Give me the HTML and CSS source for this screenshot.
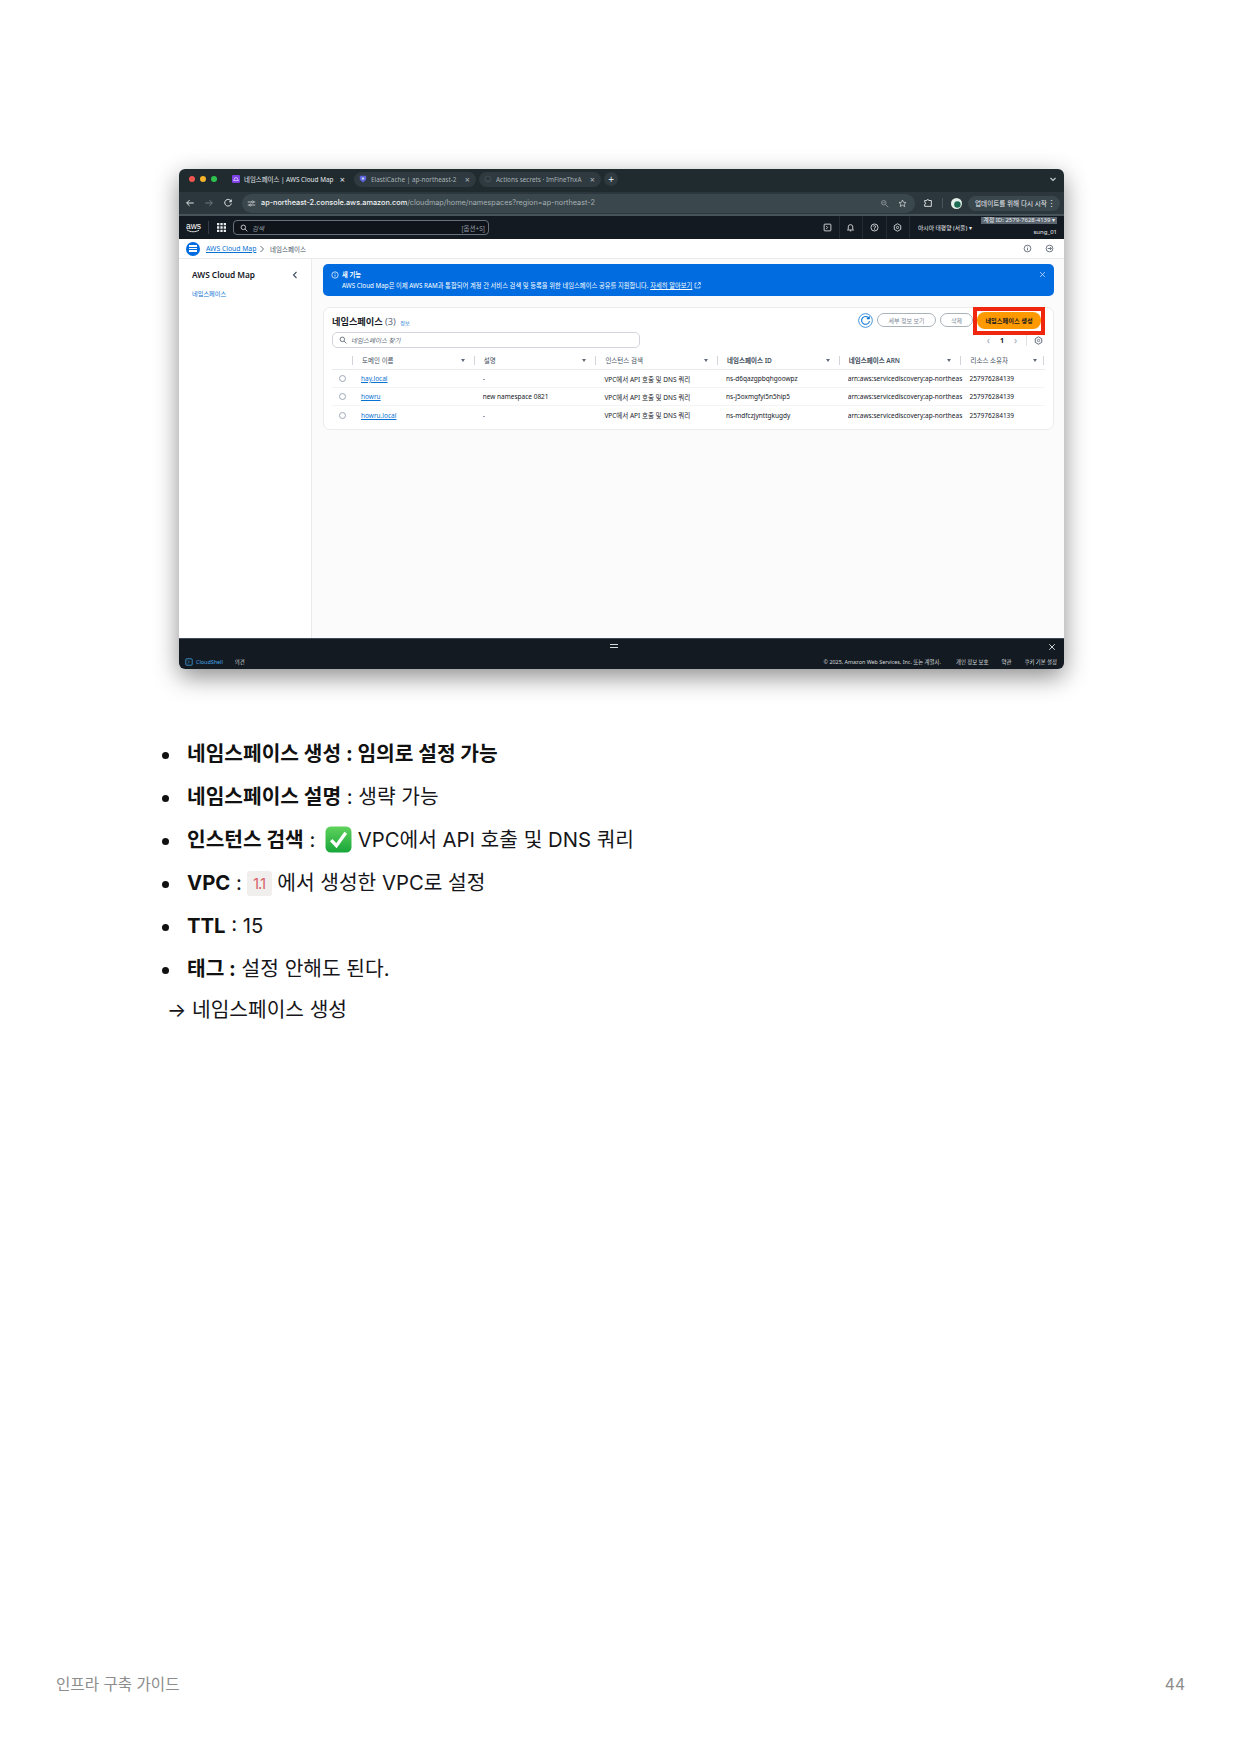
FILE: index.html
```html
<!DOCTYPE html>
<html lang="ko">

<head>
    <meta charset="UTF-8">
    <meta name="viewport" content="width=device-width, initial-scale=1.0">
    <title>인프라 구축 가이드</title>
    <link rel="stylesheet" href="styles.css">
</head>

<body>
    <div class="page">
        <div class="shot">
            <div class="tabbar">
                <div class="lights"><i class="red"></i><i class="yellow"></i><i class="green"></i></div>
                <div class="tab tab-active">
                    <svg class="fav" viewBox="0 0 10 10"><rect width="10" height="10" rx="1.5" fill="#7b3fe4"/><path d="M2 7h6L6.500 3.500h-3z" fill="none" stroke="#fff" stroke-width=".8"/></svg>
                    <span class="tab-title">네임스페이스 | AWS Cloud Map</span><span class="tab-x">×</span>
                </div>
                <div class="tab">
                    <svg class="fav" viewBox="0 0 10 10"><path d="M1 1h8v5L5 9.500 1 6z" fill="#5a62d8"/><path d="M3.500 3h3v2.500h-3z" fill="#cfd2f5"/></svg>
                    <span class="tab-title">ElastiCache | ap-northeast-2</span><span class="tab-x">×</span>
                </div>
                <div class="tab">
                    <svg class="fav" viewBox="0 0 10 10"><circle cx="5" cy="5" r="4.500" fill="#3b474b"/><circle cx="5" cy="4.500" r="2" fill="#26323a"/></svg>
                    <span class="tab-title">Actions secrets · ImFineThxA</span><span class="tab-x">×</span>
                </div>
                <span class="newtab">+</span>
                <svg class="tab-menu" viewBox="0 0 8 8"><path d="M1.500 3l2.500 2.500L6.500 3" fill="none" stroke="#c8cdcf" stroke-width="1.200"/></svg>
            </div>

            <div class="toolbar">
                <svg class="tb-icon" viewBox="0 0 12 12"><path d="M10.500 6H2M5.500 2.500L2 6l3.500 3.500" fill="none" stroke="#dfe3e5" stroke-width="1.200"/></svg>
                <svg class="tb-icon tb-dim" viewBox="0 0 12 12"><path d="M1.500 6H10M6.500 2.500L10 6l-3.500 3.500" fill="none" stroke="#6f7a7e" stroke-width="1.200"/></svg>
                <svg class="tb-icon" viewBox="0 0 12 12"><path d="M9.800 4.200A4 4 0 1 0 10 6.500M10 1.800v2.700H7.300" fill="none" stroke="#dfe3e5" stroke-width="1.200"/></svg>
                <div class="omnibox">
                    <svg class="tune" viewBox="0 0 12 12"><path d="M1 4h5M9 4h2M1 8h2M6 8h5" stroke="#dfe3e5" stroke-width="1"/><circle cx="7.500" cy="4" r="1.300" fill="none" stroke="#dfe3e5"/><circle cx="4.500" cy="8" r="1.300" fill="none" stroke="#dfe3e5"/></svg>
                    <span class="url"><b>ap-northeast-2.console.aws.amazon.com</b>/cloudmap/home/namespaces?region=ap-northeast-2</span>
                    <svg class="omni-icon zoomglass" viewBox="0 0 12 12"><circle cx="5" cy="5" r="3" fill="none" stroke="#99a3a6"/><path d="M7.500 7.500L11 11M3.500 5h3" stroke="#99a3a6"/></svg>
                    <svg class="omni-icon" viewBox="0 0 12 12"><path d="M6 1.300l1.400 3.100 3.300.3-2.500 2.200.8 3.300L6 8.200l-3 1.800.8-3.300L1.300 4.700l3.300-.3z" fill="none" stroke="#dfe3e5" stroke-width=".9"/></svg>
                </div>
                <svg class="ext" viewBox="0 0 12 12"><path d="M2 3h2.500a1.200 1.200 0 0 1 2.400 0H10v7H2V7.500a1.200 1.200 0 0 0 0-2.400z" fill="none" stroke="#e6e9ea" stroke-width="1.100"/></svg>
                <span class="tb-sep"></span>
                <svg class="avatar" viewBox="0 0 12 12"><circle cx="6" cy="6" r="6" fill="#e4efe9"/><circle cx="7" cy="7" r="3.500" fill="#1d6b52"/></svg>
                <div class="update">업데이트를 위해 다시 시작<span class="kebab">⋮</span></div>
            </div>

            <div class="awsnav">
                <div class="aws-logo">aws<svg viewBox="0 0 16 4"><path d="M1 .8c4 2.600 9 2.600 13 .3" fill="none" stroke="#fff" stroke-width=".9"/></svg></div>
                <span class="nav-sep"></span>
                <svg class="apps" viewBox="0 0 9 9"><path d="M0 0h2.300v2.300H0zM3.350 0h2.300v2.300h-2.300zM6.700 0H9v2.300H6.700zM0 3.350h2.300v2.300H0zM3.350 3.350h2.300v2.300h-2.300zM6.700 3.350H9v2.300H6.700zM0 6.700h2.300V9H0zM3.350 6.700h2.300V9h-2.300zM6.700 6.700H9V9H6.700z" fill="#e9edef"/></svg>
                <div class="aws-search">
                    <svg class="glass" viewBox="0 0 12 12"><circle cx="5" cy="5" r="3.400" fill="none" stroke="#e4e7e9" stroke-width="1.200"/><path d="M7.600 7.600L11 11" stroke="#e4e7e9" stroke-width="1.200"/></svg>
                    <em>검색</em><span class="hotkey">[옵션+S]</span>
                </div>
                <div class="nav-right">
                    <span class="nav-btn"><svg viewBox="0 0 12 12"><rect x="1.500" y="1.500" width="9" height="9" rx="1" fill="none" stroke="#e9edef" stroke-width="1.100"/><path d="M4 3.800L6.200 6 4 8.200" fill="none" stroke="#e9edef"/></svg></span>
                    <span class="nav-btn"><svg viewBox="0 0 12 12"><path d="M3 8.500V5.200a3 3 0 0 1 6 0v3.300l1 .8H2zM5 10.500h2" fill="none" stroke="#e9edef" stroke-width="1.100"/></svg></span>
                    <span class="nav-btn"><svg viewBox="0 0 12 12"><circle cx="6" cy="6" r="4.700" fill="none" stroke="#e9edef" stroke-width="1.100"/><path d="M4.500 4.800a1.500 1.500 0 1 1 1.500 1.700v1M6 8.200v1" fill="none" stroke="#e9edef"/></svg></span>
                    <span class="nav-btn"><svg viewBox="0 0 12 12"><path d="M6 1l4.300 2.500v5L6 11 1.700 8.500v-5z" fill="none" stroke="#e9edef" stroke-width="1.100"/><circle cx="6" cy="6" r="1.500" fill="none" stroke="#e9edef"/></svg></span>
                    <span class="region">아시아 태평양 (서울) ▾</span>
                    <div class="account">
                        <span class="acct-id">계정 ID: 2579-7628-4139 ▾</span>
                        <span class="acct-user">sung_01</span>
                    </div>
                </div>
            </div>

            <div class="crumbs">
                <span class="menu-dot"><i></i><i></i><i></i></span>
                <a class="link crumb-link">AWS Cloud Map</a>
                <svg class="crumb-sep" viewBox="0 0 6 8"><path d="M1.500 1l3 3-3 3" fill="none" stroke="#687078"/></svg>
                <span class="crumb-cur">네임스페이스</span>
                <div class="crumb-right">
                    <svg viewBox="0 0 12 12"><circle cx="6" cy="6" r="4.500" fill="none" stroke="#414d5c"/><path d="M6 5.500v3M6 3.500v1" stroke="#414d5c"/></svg>
                    <svg class="crumb-clock" viewBox="0 0 12 12"><circle cx="6" cy="6" r="4.500" fill="none" stroke="#414d5c"/><path d="M3.500 6h5M6.500 4l2 2-2 2" fill="none" stroke="#414d5c"/></svg>
                </div>
            </div>

            <div class="console">
                <aside class="side">
                    <div class="side-head"><strong>AWS Cloud Map</strong>
                        <svg viewBox="0 0 6 8"><path d="M4.500 1l-3 3 3 3" fill="none" stroke="#414d5c" stroke-width="1.100"/></svg>
                    </div>
                    <a class="side-link">네임스페이스</a>
                </aside>
                <main class="content">
                    <div class="banner">
                        <svg class="banner-info" viewBox="0 0 12 12"><circle cx="6" cy="6" r="4.800" fill="none" stroke="#fff" stroke-width="1.100"/><path d="M6 5.300v3.200M6 3.200v1.200" stroke="#fff" stroke-width="1.100"/></svg>
                        <div class="banner-text">
                            <strong>새 기능</strong>
                            <p>AWS Cloud Map은 이제 AWS RAM과 통합되어 계정 간 서비스 검색 및 등록을 위한 네임스페이스 공유를 지원합니다. <u>자세히 알아보기</u>
                                <svg viewBox="0 0 10 10"><path d="M4 1.500H1.500v7h7V6M5.500 1h3.500v3.500M9 1L5 5" fill="none" stroke="#fff"/></svg>
                            </p>
                        </div>
                        <svg class="banner-x" viewBox="0 0 10 10"><path d="M1.500 1.500l7 7M8.500 1.500l-7 7" stroke="#dbe9fb" stroke-width="1"/></svg>
                    </div>

                    <section class="card">
                        <div class="card-head">
                            <h2>네임스페이스 <span>(3)</span> <a class="info">정보</a></h2>
                            <div class="actions">
                                <svg class="refresh" viewBox="0 0 16 16"><circle cx="8" cy="8" r="7.300" fill="none" stroke="#0972d3" stroke-width=".8"/><path d="M11.500 5.500A4.200 4.200 0 1 0 12.200 8.500M12 3.500v2.500H9.500" fill="none" stroke="#0972d3" stroke-width="1.100"/></svg>
                                <span class="btn btn-wide">세부 정보 보기</span>
                                <span class="btn btn-del">삭제</span>
                                <div class="mark"><span class="btn-create">네임스페이스 생성</span></div>
                            </div>
                        </div>
                        <div class="filter-row">
                            <div class="filter">
                                <svg viewBox="0 0 12 12"><circle cx="5" cy="5" r="3.400" fill="none" stroke="#414d5c" stroke-width="1.100"/><path d="M7.600 7.600L11 11" stroke="#414d5c" stroke-width="1.100"/></svg>
                                <em>네임스페이스 찾기</em>
                            </div>
                            <div class="pager">
                                <span class="pg-arrow">‹</span><b>1</b><span class="pg-arrow">›</span><span class="pg-sep"></span>
                                <svg viewBox="0 0 12 12"><path d="M6 1l4.300 2.500v5L6 11 1.700 8.500v-5z" fill="none" stroke="#5f6b7a" stroke-width="1.300"/><circle cx="6" cy="6" r="1.600" fill="none" stroke="#5f6b7a" stroke-width="1.100"/></svg>
                            </div>
                        </div>

                        <div class="tbl">
                            <div class="row thead">
                                <span></span>
                                <span class="th">도메인 이름</span>
                                <span class="th">설명</span>
                                <span class="th">인스턴스 검색</span>
                                <span class="th"><b>네임스페이스 ID</b></span>
                                <span class="th"><b>네임스페이스 ARN</b></span>
                                <span class="th th-short">리소스 소유자</span>
                            </div>
                            <div class="row">
                                <span class="radio"></span>
                                <a class="link">hay.local</a>
                                <span>-</span>
                                <span>VPC에서 API 호출 및 DNS 쿼리</span>
                                <span>ns-d6qazgpbqhgoowpz</span>
                                <span>arn:aws:servicediscovery:ap-northeas</span>
                                <span>257976284139</span>
                            </div>
                            <div class="row">
                                <span class="radio"></span>
                                <a class="link">howru</a>
                                <span>new namespace 0821</span>
                                <span>VPC에서 API 호출 및 DNS 쿼리</span>
                                <span>ns-j5oxmgfyi5n5hip5</span>
                                <span>arn:aws:servicediscovery:ap-northeas</span>
                                <span>257976284139</span>
                            </div>
                            <div class="row row-last">
                                <span class="radio"></span>
                                <a class="link">howru.local</a>
                                <span>-</span>
                                <span>VPC에서 API 호출 및 DNS 쿼리</span>
                                <span>ns-mdfczjynttgkugdy</span>
                                <span>arn:aws:servicediscovery:ap-northeas</span>
                                <span>257976284139</span>
                            </div>
                        </div>
                    </section>
                </main>
            </div>

            <div class="shell-bar">
                <span class="handle"></span>
                <svg viewBox="0 0 10 10"><path d="M1.500 1.500l7 7M8.500 1.500l-7 7" stroke="#e9edef" stroke-width="1.100"/></svg>
            </div>
            <div class="aws-foot">
                <svg viewBox="0 0 10 10"><rect x="1" y="1" width="8" height="8" rx="1" fill="none" stroke="#42a5e8"/><path d="M3.500 3l2 2-2 2" fill="none" stroke="#42a5e8" stroke-width=".8"/></svg>
                <span class="cs">CloudShell</span>
                <span class="fb">의견</span>
                <span class="copy">© 2025, Amazon Web Services, Inc. 또는 계열사.</span>
                <span>개인 정보 보호</span>
                <span>약관</span>
                <span>쿠키 기본 설정</span>
            </div>
        </div>

        <ul class="notes">
            <li><b>네임스페이스 생성 : 임의로 설정 가능</b></li>
            <li><b>네임스페이스 설명</b> : 생략 가능</li>
            <li><b>인스턴스 검색</b> :
                <svg class="check" viewBox="0 0 26 26"><defs><linearGradient id="chk" x1="0" y1="0" x2="0" y2="1"><stop offset="0" stop-color="#5fd25c"/><stop offset="1" stop-color="#18a63a"/></linearGradient></defs><rect x=".5" y=".5" width="25" height="25" rx="5" fill="url(#chk)"/><path d="M6 13.500l5 5.500L20 6.500" fill="none" stroke="#fff" stroke-width="3.200"/></svg>
                VPC에서 API 호출 및 DNS 쿼리</li>
            <li><b>VPC</b> : <code>1.1</code> 에서 생성한 VPC로 설정</li>
            <li><b>TTL</b> : 15</li>
            <li><b>태그 :</b> 설정 안해도 된다.</li>
        </ul>
        <p class="next">→ 네임스페이스 생성</p>

        <footer class="foot">
            <span>인프라 구축 가이드</span>
            <span>44</span>
        </footer>
    </div>
</body>

</html>
```

FILE: styles.css
```css
* {
    margin: 0;
    padding: 0;
    box-sizing: border-box;
}

body {
    background: #fff;
    font-family: Inter, "Noto Sans CJK KR", sans-serif;
    color: #1a1a1a;
}

.page {
    height: 1754px;
    padding: 169px 57px 0 56px;
    display: flex;
    flex-direction: column;
    overflow: hidden;
}

/* screenshot of the console */
.shot {
    margin-left: 123px;
    width: 885px;
    height: 500px;
    flex: none;
    display: flex;
    flex-direction: column;
    border-radius: 6px;
    overflow: hidden;
    background: #fff;
    box-shadow: 0 8px 24px rgba(0, 0, 0, .45);
    font-family: "Noto Sans", "Noto Sans CJK KR", sans-serif;
    font-size: 6.500px;
    color: #16191f;
}

.tabbar {
    height: 23px;
    flex: none;
    background: #202b30;
    display: flex;
    align-items: center;
    padding: 0 0 3px 10px;
    color: #dfe3e5;
}

.lights {
    display: flex;
    gap: 5px;
    width: 42px;
}

.lights i {
    width: 6px;
    height: 6px;
    border-radius: 50%;
}

.red { background: #f0564f; }
.yellow { background: #f5b42a; }
.green { background: #2fc24f; }

.tab {
    width: 122px;
    height: 15px;
    margin-right: 3px;
    padding: 0 6px 0 5px;
    border-radius: 8px;
    background: #2e3a40;
    display: flex;
    align-items: center;
    gap: 4px;
    color: #a9b2b5;
    font-size: 6.400px;
    white-space: nowrap;
}

.tab-active {
    width: 120px;
    background: none;
    color: #e4e8ea;
    padding-left: 1px;
}

.fav {
    width: 8px;
    height: 8px;
    flex: none;
}

.tab-title {
    flex: 1;
    overflow: hidden;
}

.tab-x {
    font-size: 9px;
    line-height: 1;
}

.newtab {
    width: 14px;
    height: 14px;
    border-radius: 50%;
    background: #2e3a40;
    text-align: center;
    font-size: 10px;
    line-height: 14px;
}

.tab-menu {
    width: 8px;
    height: 8px;
    margin-left: auto;
    margin-right: 7px;
}

.toolbar {
    height: 24px;
    flex: none;
    background: #2b373c;
    border-bottom: 2px solid #46545a;
    display: flex;
    align-items: center;
    padding-left: 6px;
}

.tb-icon {
    width: 10px;
    height: 10px;
    margin-right: 9px;
    flex: none;
}

.omnibox {
    width: 673px;
    height: 19px;
    margin-left: 0;
    border-radius: 10px;
    background: #3a474d;
    display: flex;
    align-items: center;
    padding: 0 8px 0 5px;
    flex: none;
}

.tune {
    width: 9px;
    height: 9px;
    flex: none;
}

.url {
    margin: 0 0 1px 5px;
    font-family: Inter, sans-serif;
    font-size: 7.300px;
    color: #a6b0b3;
    white-space: nowrap;
}

.url b {
    font-weight: 500;
    color: #eef1f2;
}

.omni-icon {
    width: 9px;
    height: 9px;
    margin-left: 9px;
    flex: none;
}

.zoomglass {
    margin-left: auto;
}

.ext {
    width: 10px;
    height: 10px;
    margin-left: 8px;
    flex: none;
}

.tb-sep {
    width: 1px;
    height: 10px;
    background: #46545a;
    margin: 0 8px 0 9px;
}

.avatar {
    width: 11px;
    height: 11px;
    flex: none;
}

.update {
    margin-left: 6px;
    width: 92px;
    height: 15px;
    border-radius: 8px;
    background: #3a474d;
    color: #e9edef;
    font-size: 6.600px;
    display: flex;
    align-items: center;
    padding-left: 7px;
    justify-content: space-between;
    padding-right: 5px;
    white-space: nowrap;
}

.kebab {
    font-size: 9px;
    line-height: 1;
}

.awsnav {
    height: 23px;
    flex: none;
    background: #141a22;
    display: flex;
    align-items: center;
    padding-left: 7px;
    color: #e9edef;
}

.aws-logo {
    width: 15px;
    font-family: "Liberation Sans", sans-serif;
    font-size: 8.500px;
    line-height: 6px;
    color: #fff;
    display: flex;
    flex-direction: column;
    align-items: center;
}

.aws-logo svg {
    width: 15px;
    height: 4px;
}

.nav-sep {
    width: 1px;
    height: 13px;
    background: #333d49;
    margin: 0 8px 0 7px;
}

.apps {
    width: 9px;
    height: 9px;
    flex: none;
}

.aws-search {
    margin-left: 7px;
    width: 256px;
    height: 15px;
    border: 1px solid #68717c;
    border-radius: 4px;
    background: #0f141a;
    display: flex;
    align-items: center;
    padding: 0 3px 0 6px;
    color: #8f99a3;
}

.glass {
    width: 8px;
    height: 8px;
    flex: none;
}

.aws-search em {
    margin-left: 4px;
}

.hotkey {
    margin-left: auto;
}

.nav-right {
    display: flex;
    align-items: center;
    margin-left: auto;
    height: 100%;
}

.nav-btn {
    width: 23.500px;
    height: 100%;
    display: flex;
    align-items: center;
    justify-content: center;
    border-right: 1px solid #232c37;
}

.nav-btn svg {
    width: 9px;
    height: 9px;
}

.region {
    margin-left: 8px;
    width: 63px;
    font-size: 5.800px;
    white-space: nowrap;
}

.account {
    width: 83px;
    height: 100%;
    display: flex;
    flex-direction: column;
    align-items: flex-end;
    padding-top: 1px;
    padding-right: 7px;
    font-size: 6px;
}

.acct-id {
    background: #5b6670;
    color: #e9edef;
    padding: 0 2px;
    line-height: 7px;
    white-space: nowrap;
}

.acct-user {
    margin-top: 4px;
    line-height: 8px;
}

.crumbs {
    height: 20px;
    flex: none;
    display: flex;
    align-items: center;
    padding-left: 7px;
    border-bottom: 1px solid #e9ebed;
    font-size: 6.800px;
}

.menu-dot {
    width: 14px;
    height: 14px;
    border-radius: 50%;
    background: #006ce0;
    display: flex;
    flex-direction: column;
    align-items: center;
    justify-content: center;
    gap: 1.300px;
    margin-right: 6px;
}

.menu-dot i {
    width: 8px;
    height: 1.200px;
    background: #fff;
}

.link {
    color: #0972d3;
    text-decoration: underline;
    text-underline-offset: 1px;
}

.crumb-link {
    width: 50px;
    white-space: nowrap;
}

.crumb-sep {
    width: 6px;
    height: 8px;
    margin: 0 5px 0 3px;
}

.crumb-cur {
    color: #414d5c;
    font-size: 6.500px;
}

.crumb-right {
    margin-left: auto;
    display: flex;
    align-items: center;
    padding-right: 10px;
}

.crumb-right svg {
    width: 9px;
    height: 9px;
}

.crumb-clock {
    margin-left: 13px;
}

.console {
    flex: 1;
    display: flex;
    min-height: 0;
}

.side {
    width: 133px;
    flex: none;
    background: #fff;
    border-right: 1px solid #e9ebed;
    padding: 9px 12px 0 13px;
}

.side-head {
    display: flex;
    justify-content: space-between;
    align-items: center;
    font-size: 8.300px;
    line-height: 13px;
}

.side-head strong {
    font-weight: 600;
    color: #16191f;
}

.side-head svg {
    width: 6px;
    height: 8px;
    margin-right: 1px;
}

.side-link {
    display: block;
    margin-top: 8px;
    font-size: 6.200px;
    color: #0972d3;
}

.content {
    flex: 1;
    background: #fbfbfb;
    padding: 5px 12px 0 11px;
}

.banner {
    height: 32px;
    border-radius: 5px;
    background: #006ce0;
    color: #fff;
    display: flex;
    padding: 6px 8px 0 8px;
}

.banner-info {
    width: 8px;
    height: 8px;
    flex: none;
    margin-top: 1px;
}

.banner-text {
    margin-left: 3px;
    flex: 1;
    line-height: 10.500px;
    font-size: 6.300px;
}

.banner-text strong {
    display: block;
    font-weight: 600;
}

.banner-text p {
    white-space: nowrap;
}

.banner-text svg {
    width: 7px;
    height: 7px;
    vertical-align: -1px;
}

.banner-x {
    width: 7px;
    height: 7px;
    margin-top: 1px;
}

.card {
    margin-top: 11px;
    height: 123px;
    border: 1px solid #e9ebed;
    border-radius: 7px;
    background: #fff;
    padding: 0 8px;
}

.card-head {
    height: 24px;
    display: flex;
    justify-content: space-between;
    align-items: center;
}

.card-head h2 {
    margin-top: 1px;
    font-size: 9.200px;
    font-weight: 700;
    color: #16191f;
    white-space: nowrap;
}

.card-head h2 span {
    font-weight: 400;
    color: #5f6b7a;
}

.info {
    font-size: 5px;
    font-weight: 400;
    color: #0972d3;
    margin-left: 2px;
}

.actions {
    display: flex;
    align-items: center;
}

.refresh {
    width: 15px;
    height: 15px;
    margin-right: 4px;
}

.btn {
    height: 14px;
    border: 1px solid #aab2ba;
    border-radius: 7px;
    color: #7d8998;
    font-size: 6px;
    display: flex;
    align-items: center;
    justify-content: center;
}

.btn-wide {
    width: 59px;
}

.btn-del {
    width: 33px;
    margin-left: 4px;
}

/* red annotation drawn round the create button */
.mark {
    width: 72px;
    height: 28px;
    margin-top: 1px;
    border: 4px solid #f0260f;
    display: flex;
    align-items: center;
    justify-content: center;
}

.btn-create {
    width: 64px;
    height: 17px;
    border-radius: 8px;
    background: #ff9900;
    color: #16191f;
    font-size: 6.200px;
    font-weight: 600;
    display: flex;
    align-items: center;
    justify-content: center;
    white-space: nowrap;
}

.filter-row {
    display: flex;
    justify-content: space-between;
    align-items: flex-start;
    height: 17px;
}

.filter {
    width: 308px;
    height: 16px;
    border: 1px solid #d1d5db;
    border-radius: 5px;
    display: flex;
    align-items: center;
    padding-left: 6px;
    color: #5f6b7a;
}

.filter svg {
    width: 8px;
    height: 8px;
    margin-right: 4px;
}

.pager {
    display: flex;
    align-items: center;
    height: 16px;
    margin-right: 2px;
    color: #16191f;
    font-size: 7px;
}

.pager b {
    margin: 0 10px;
}

.pg-arrow {
    color: #9ba7b6;
    font-size: 10px;
    line-height: 1;
}

.pg-sep {
    width: 1px;
    height: 11px;
    background: #dfe2e5;
    margin: 0 7px 0 9px;
}

.pager svg {
    width: 9px;
    height: 9px;
}

.tbl {
    margin-top: 3px;
    width: 713px;
}

.row {
    display: grid;
    grid-template-columns: 29px repeat(5, 121.700px) 75.500px;
    height: 18px;
    align-items: center;
    border-bottom: 1px solid #f4f4f4;
    white-space: nowrap;
    font-size: 6.500px;
    color: #16191f;
}

.row-last {
    border-bottom: none;
}

.row > span:not(.radio), .row > a {
    overflow: hidden;
}

.thead {
    border-bottom: 1px solid #e9ebed;
    color: #414d5c;
}

.th {
    position: relative;
    padding-left: 9px;
    margin-left: -9px;
    border-left: 1px solid #d1d5db;
    line-height: 9px;
    height: 9px;
    overflow: visible !important;
}

/* sort caret at the end of each heading */
.th::after {
    content: "";
    position: absolute;
    right: 18px;
    top: 3px;
    border-left: 2.500px solid transparent;
    border-right: 2.500px solid transparent;
    border-top: 3.500px solid #5f6b7a;
}

.th-short {
    border-right: 1px solid #d1d5db;
    margin-right: 1px;
}

.th-short::after {
    right: 6px;
}

.th b {
    font-weight: 600;
}

.radio {
    width: 7px;
    height: 7px;
    border: 1px solid #9ba7b6;
    border-radius: 50%;
    margin-left: 7px;
    background: #fff;
}

.shell-bar {
    height: 16px;
    flex: none;
    background: #141a22;
    border-top: 1px solid #3e4a57;
    display: flex;
    align-items: center;
    justify-content: flex-end;
    position: relative;
    padding-right: 8px;
}

.shell-bar svg {
    width: 8px;
    height: 8px;
}

.handle {
    position: absolute;
    left: 431px;
    top: 5px;
    width: 8px;
    height: 4px;
    border-top: 1px solid #d5dbdb;
    border-bottom: 1px solid #d5dbdb;
}

.aws-foot {
    height: 15px;
    flex: none;
    background: #141a22;
    color: #d5dbdb;
    font-size: 5.400px;
    display: flex;
    align-items: center;
    padding: 0 7px 0 6px;
    gap: 13px;
    white-space: nowrap;
}

.aws-foot svg {
    width: 8px;
    height: 8px;
    margin-right: -12px;
}

.cs {
    color: #42a5e8;
    margin-left: 2px;
}

.fb {
    margin-left: -1px;
}

.copy {
    margin-left: auto;
    margin-right: 2px;
}

/* notes under the screenshot */
.notes {
    margin-top: 70px;
    padding-left: 131px;
    list-style: none;
    font-size: 20.300px;
    line-height: 30px;
    color: #16161a;
}

.notes li {
    position: relative;
    margin-bottom: 13px;
}

.notes li::before {
    content: "";
    position: absolute;
    left: -25px;
    top: 13px;
    width: 7px;
    height: 7px;
    border-radius: 50%;
    background: #111;
}

.notes b {
    font-weight: 700;
    color: #111;
}

.check {
    width: 27px;
    height: 27px;
    vertical-align: -2px;
    margin: -9px 0 -4px 4px;
}

.notes code {
    display: inline-block;
    width: 25px;
    height: 25px;
    margin: 0 0 0 -1px;
    border-radius: 3px;
    background: #f0efed;
    color: #d9636a;
    font-family: Inter, sans-serif;
    font-size: 15px;
    line-height: 25px;
    text-align: center;
    vertical-align: 1px;
    letter-spacing: -1px;
}

.next {
    margin-left: 111px;
    margin-top: -2px;
    font-size: 20.300px;
    line-height: 30px;
    color: #16161a;
}

.foot {
    margin-top: auto;
    margin-bottom: 58px;
    display: flex;
    justify-content: space-between;
    font-size: 15.600px;
    line-height: 22px;
    color: #8c8c8c;
}
```
